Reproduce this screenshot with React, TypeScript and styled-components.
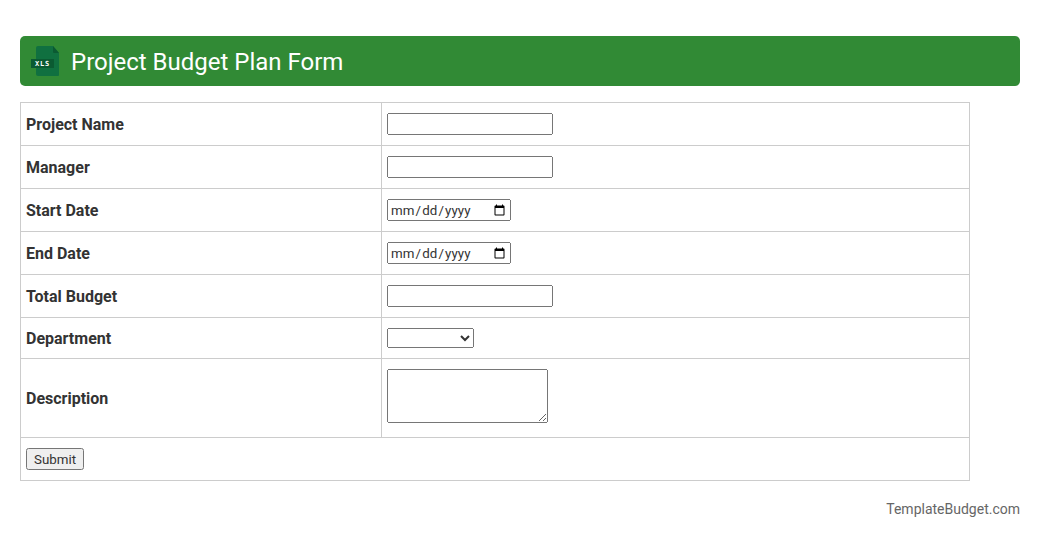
import React from "react";
import styled, { createGlobalStyle } from "styled-components";

const Global = createGlobalStyle`
  html, body { margin: 0; padding: 0; background: #fff; }
  body { font-family: Roboto, "Liberation Sans", sans-serif; color: #333; font-size: 16px; }
`;
const Page = styled.div`
  width: 1040px; height: 538px; box-sizing: border-box; padding: 36px 20px 0; overflow: hidden;
`;
const Header = styled.h1`
  margin: 0 0 16px; height: 50px; background: #318a35; border-radius: 5px; color: #fff;
  display: flex; align-items: center; gap: 11px; padding-left: 10px;
  font-size: 24px; font-weight: 400;
`;
const Title = styled.span`
  padding-top: 2px;
`;
const Table = styled.table`
  width: 950px; border-collapse: collapse; table-layout: fixed; border: 1px solid #ccc;
`;
const Label = styled.th`
  width: 350px; padding: 0 5px; border: 1px solid #ccc; text-align: left; font-size: 16px; font-weight: 700; color: #333;
`;
const Cell = styled.td<{ $h: number }>`
  height: ${p => p.$h}px; padding: 0 5px; border: 1px solid #ccc; box-sizing: border-box;
  font-size: 16px;
`;
const Text = styled.input`
  display: block; box-sizing: border-box; width: 166px; height: 22px; font-family: Roboto, sans-serif; font-size: 13.33px; color: #333;
`;
const DateInput = styled.input`
  display: block; box-sizing: border-box; width: 124px; height: 22px; padding: 2px 1px 1px; font-family: Roboto, sans-serif; font-size: 13.33px; letter-spacing: 0.1px; color: #333;
`;
const Select = styled.select`
  display: block; box-sizing: border-box; width: 87px; height: 20px; font-family: Roboto, sans-serif; font-size: 13.33px; color: #333;
`;
const Area = styled.textarea`
  display: block; box-sizing: border-box; width: 161px; height: 54px; margin-top: -4px;
`;
const Submit = styled.button`
  display: block; box-sizing: border-box; width: 58px; height: 22px; padding: 0; font-family: Roboto, sans-serif; font-size: 13.33px; color: #333;
`;
const Footer = styled.div`
  margin-top: 20px; text-align: right; color: #666; font-size: 14px;
`;
const XlsIcon = () => (
  <svg width="30" height="32" viewBox="0 0 30 32">
    <path d="M8 1h15l6 7v22a1 1 0 0 1-1 1H8a2 2 0 0 1-2-2V3a2 2 0 0 1 2-2z" fill="#107040" />
    <path d="M23 1l6 7h-5a1 1 0 0 1-1-1z" fill="#0b5a32" />
    <rect x="1" y="14" width="23" height="9" fill="#0b5a32" />
    <text x="12.5" y="21" fontSize="7" fontWeight="700" letterSpacing="0.8" fill="#fff" textAnchor="middle" fontFamily="'DejaVu Sans Mono', monospace">XLS</text>
  </svg>
);
const rows: [string, React.ReactNode, number][] = [
  ["Project Name", <Text type="text" />, 43],
  ["Manager", <Text type="text" />, 43],
  ["Start Date", <DateInput type="date" />, 43],
  ["End Date", <DateInput type="date" />, 43],
  ["Total Budget", <Text type="text" />, 43],
  ["Department", <Select />, 41],
  ["Description", <Area />, 79],
];
export default function App() {
  return (
    <Page>
      <Global />
      <Header><XlsIcon /><Title>Project Budget Plan Form</Title></Header>
      <Table>
        <tbody>
          {rows.map(([l, c, h]) => (
            <tr key={l}><Label>{l}</Label><Cell $h={h}>{c}</Cell></tr>
          ))}
          <tr><Cell $h={43} colSpan={2}><Submit>Submit</Submit></Cell></tr>
        </tbody>
      </Table>
      <Footer>TemplateBudget.com</Footer>
    </Page>
  );
}
